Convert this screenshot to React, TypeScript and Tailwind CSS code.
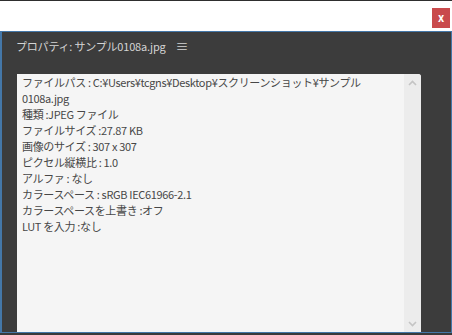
import React from "react";

const lines: React.ReactNode[] = [
  "ファイルパス : C:¥Users¥tcgns¥Desktop¥スクリーンショット¥サンプル",
  "0108a.jpg",
  "種類 :JPEG ファイル",
  "ファイルサイズ :27.87 KB",
  "画像のサイズ : 307 x 307",
  "ピクセル縦横比 : 1.0",
  "アルファ : なし",
  "カラースペース : sRGB IEC61966-2.1",
  "カラースペースを上書き :オフ",
  "LUT を入力 :なし",
];

export default function App() {
  const font = { fontFamily: '"Noto Sans CJK JP", "Noto Sans", sans-serif' };
  return (
    <div className="w-[452px] h-[335px] bg-white flex flex-col overflow-hidden" style={font}>
      <div className="h-px bg-[#2e2e2e]" />
      <div className="h-[30px] flex justify-end items-start">
        <div className="mt-[7px] mr-[2px] w-[18px] h-[20px] bg-[#c94a4c] text-white text-[11px] font-bold leading-[19px] text-center">
          x
        </div>
      </div>
      <div className="flex-1 flex flex-col bg-[#3c3c3c] border border-[#4477a8] border-l-2 min-h-0">
        <div className="h-[42px] pl-[14px] pt-[4px] flex items-start text-[#d4d4d4] text-[11px] leading-[20px] tracking-[-0.2px]">
          <span>プロパティ: サンプル0108a.jpg</span>
          <span className="ml-[10px] text-[13px]">≡</span>
        </div>
        <div className="flex-1 ml-[15px] mr-[30px] flex bg-[#f5f5f5] rounded-tr-[3px] min-h-0">
          <div className="flex-1 pl-[5px] pt-0 text-[#474747] text-[11px] leading-[16px] tracking-[-0.35px]">
            {lines.map((l, i) => (
              <div key={i} className="whitespace-nowrap">{l}</div>
            ))}
          </div>
          <div className="w-[17px] bg-[#ececec] rounded-tr-[3px] flex flex-col items-center justify-between pt-[6px] pb-[5px]">
            <svg width="9" height="6" viewBox="0 0 9 6">
              <path d="M1 5 L4.5 1.5 L8 5" stroke="#c4c4c4" strokeWidth="1.6" fill="none" />
            </svg>
            <svg width="9" height="6" viewBox="0 0 9 6">
              <path d="M1 1 L4.5 4.5 L8 1" stroke="#c4c4c4" strokeWidth="1.6" fill="none" />
            </svg>
          </div>
        </div>
      </div>
      <div className="h-[2px] bg-[#3a3a3a]" />
    </div>
  );
}
